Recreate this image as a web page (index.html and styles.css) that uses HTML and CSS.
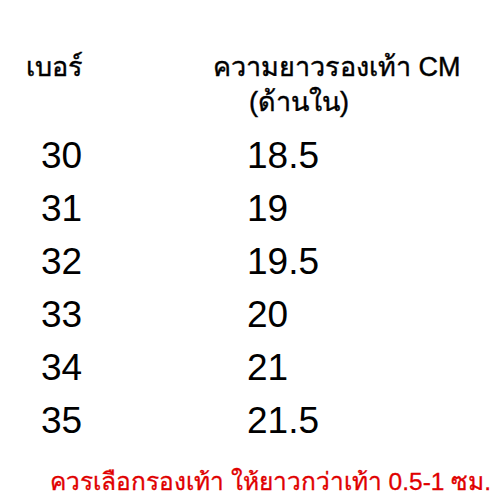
FILE: index.html
```html
<!DOCTYPE html>
<html lang="th">
<head>
<meta charset="utf-8">
<link rel="stylesheet" href="styles.css">
</head>
<body>
<div class="page">
  <div class="head">
    <div class="h1">เบอร์</div>
    <div class="h2">
      <div>ความยาวรองเท้า CM</div>
      <div class="sub">(ด้านใน)</div>
    </div>
  </div>
  <div class="rows">
    <div class="row"><span class="size">30</span><span class="len">18.5</span></div>
    <div class="row"><span class="size">31</span><span class="len">19</span></div>
    <div class="row"><span class="size">32</span><span class="len">19.5</span></div>
    <div class="row"><span class="size">33</span><span class="len">20</span></div>
    <div class="row"><span class="size">34</span><span class="len">21</span></div>
    <div class="row"><span class="size">35</span><span class="len">21.5</span></div>
  </div>
  <div class="note">ควรเลือกรองเท้า ให้ยาวกว่าเท้า 0.5-1 ซม.</div>
</div>
</body>
</html>
```
FILE: styles.css
```css
html, body {
  margin: 0;
  padding: 0;
  background: #ffffff;
}
.page {
  width: 500px;
  height: 500px;
  font-family: "Liberation Sans", "Noto Sans", sans-serif;
  color: #000;
  padding-top: 50px;
  box-sizing: border-box;
}
.head {
  display: flex;
  font-size: 27px;
  line-height: 35px;
  -webkit-text-stroke: 0.4px #000;
}
.h1 {
  width: 187px;
  padding-left: 26px;
}
.h2 .sub {
  padding-left: 36px;
}
.rows {
  padding-top: 9px;
}
.row {
  display: flex;
  font-size: 37px;
  line-height: 53px;
}
.size {
  width: 206px;
  padding-left: 41px;
}
.note {
  color: #e00000;
  font-size: 24.5px;
  padding-left: 50px;
  padding-top: 15px;
  -webkit-text-stroke: 0.3px #e00000;
}
```
